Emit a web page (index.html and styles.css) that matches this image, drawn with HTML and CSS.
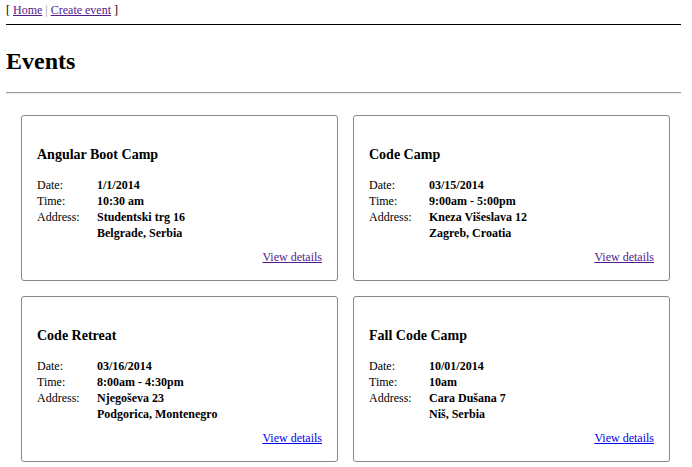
FILE: index.html
```html
<!DOCTYPE html>
<html>
<head>
<meta charset="utf-8">
<link rel="stylesheet" href="styles.css">
</head>
<body>
<div class="nav">[ <a class="visited" href="#">Home</a> <span class="sep">|</span> <a class="visited" href="#">Create event</a> ]</div>
<hr class="rule-top">
<h1 class="title">Events</h1>
<hr class="rule">
<div class="cards">
  <div class="card">
    <h3 class="card-title">Angular Boot Camp</h3>
    <div class="info">
      <span class="label">Date:</span><span class="value">1/1/2014</span>
      <span class="label">Time:</span><span class="value">10:30 am</span>
      <span class="label">Address:</span><span class="value">Studentski trg 16<br>Belgrade, Serbia</span>
    </div>
    <div class="more"><a class="visited" href="#">View details</a></div>
  </div>
  <div class="card">
    <h3 class="card-title">Code Camp</h3>
    <div class="info">
      <span class="label">Date:</span><span class="value">03/15/2014</span>
      <span class="label">Time:</span><span class="value">9:00am - 5:00pm</span>
      <span class="label">Address:</span><span class="value">Kneza Višeslava 12<br>Zagreb, Croatia</span>
    </div>
    <div class="more"><a class="visited" href="#">View details</a></div>
  </div>
  <div class="card">
    <h3 class="card-title">Code Retreat</h3>
    <div class="info">
      <span class="label">Date:</span><span class="value">03/16/2014</span>
      <span class="label">Time:</span><span class="value">8:00am - 4:30pm</span>
      <span class="label">Address:</span><span class="value">Njegoševa 23<br>Podgorica, Montenegro</span>
    </div>
    <div class="more"><a class="unvisited" href="#">View details</a></div>
  </div>
  <div class="card">
    <h3 class="card-title">Fall Code Camp</h3>
    <div class="info">
      <span class="label">Date:</span><span class="value">10/01/2014</span>
      <span class="label">Time:</span><span class="value">10am</span>
      <span class="label">Address:</span><span class="value">Cara Dušana 7<br>Niš, Serbia</span>
    </div>
    <div class="more"><a class="unvisited" href="#">View details</a></div>
  </div>
</div>
</body>
</html>
```
FILE: styles.css
```css
html, body {
  background: #fff;
}
body {
  margin: 0 11px 0 6px;
  padding-top: 2px;
  font-family: "Liberation Serif", "Times New Roman", serif;
  font-size: 12px;
  line-height: 16px;
  color: #000;
}
a.visited { color: #551a8b; text-decoration: underline; }
a.unvisited { color: #0000ee; text-decoration: underline; }
.sep { color: #999; }
.nav {
  height: 16px;
}
.rule-top {
  margin: 6px 0 0;
  border: 0;
  border-top: 1px solid #000;
  height: 0;
}
.title {
  margin: 0;
  padding-top: 22px;
  font-size: 24px;
  line-height: 28px;
  font-weight: bold;
}
.rule {
  margin: 17px 0 0;
  border: 0;
  border-top: 1px solid #9a9a9a;
  border-bottom: 1px solid #eee;
  height: 0;
}
.cards {
  display: grid;
  grid-template-columns: 317px 317px;
  grid-auto-rows: 166px;
  gap: 15px;
  padding: 21px 0 0 15px;
}
.card {
  box-sizing: border-box;
  border: 1px solid #888;
  border-radius: 3px;
  padding: 30px 15px 0 15px;
  display: flex;
  flex-direction: column;
}
.card-title {
  margin: 0;
  font-size: 14px;
  line-height: 18px;
  font-weight: bold;
}
.info {
  margin-top: 13px;
  display: grid;
  grid-template-columns: 60px 1fr;
}
.value {
  font-weight: bold;
}
.more {
  margin-top: 8px;
  text-align: right;
}
```
